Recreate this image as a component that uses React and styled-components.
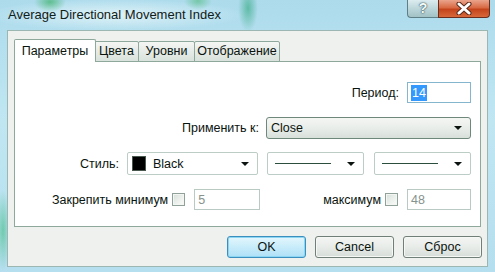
import React from "react";
import styled, { createGlobalStyle } from "styled-components";

const Global = createGlobalStyle`
  body {
    margin: 0;
    overflow: hidden;
    font-family: "Liberation Sans", Arial, sans-serif;
  }
`;

export default function App() {
  return (
    <Window>
      <Global />
      <TitleBar>
        <Title>Average Directional Movement Index</Title>
        <Caption>
          <HelpButton>?</HelpButton>
          <CloseButton>
            <svg width="18" height="13" viewBox="0 0 18 13">
              <path
                d="M4 2 L14 11 M14 2 L4 11"
                stroke="#5a2a1a"
                strokeWidth="5"
                strokeLinecap="round"
              />
              <path
                d="M4 2 L14 11 M14 2 L4 11"
                stroke="#ffffff"
                strokeWidth="3"
                strokeLinecap="round"
              />
            </svg>
          </CloseButton>
        </Caption>
      </TitleBar>

      <Client>
        <Tabs>
          <Tab $active $w={82}>Параметры</Tab>
          <Tab $w={45}>Цвета</Tab>
          <Tab $w={57}>Уровни</Tab>
          <Tab $w={86}>Отображение</Tab>
        </Tabs>

        <Panel>
          <Row>
            <Label>Период:</Label>
            <Input $w={64} $focus>
              <Selected>14</Selected>
            </Input>
          </Row>

          <Row $gap={7}>
            <Label>Применить к:</Label>
            <Combo $w={205}>
              <span>Close</span>
              <Arrow />
            </Combo>
          </Row>

          <Row $h={23} $gap={8}>
            <Label>Стиль:</Label>
            <FlatSelect $w={131}>
              <Swatch />
              <span>Black</span>
              <Arrow />
            </FlatSelect>
            <FlatSelect $w={97} $ml={1}>
              <LineSample />
              <Arrow />
            </FlatSelect>
            <FlatSelect $w={97} $ml={2}>
              <LineSample />
              <Arrow />
            </FlatSelect>
          </Row>

          <Row $gap={4}>
            <Label>Закрепить минимум</Label>
            <Check />
            <Input $w={66} $disabled $ml={5}>
              5
            </Input>
            <Label $ml={59}>максимум</Label>
            <Check />
            <Input $w={64} $disabled $ml={5}>
              48
            </Input>
          </Row>
        </Panel>

        <Buttons>
          <Button $default>OK</Button>
          <Button>Cancel</Button>
          <Button>Сброс</Button>
        </Buttons>
      </Client>
    </Window>
  );
}

const Window = styled.div`
  width: 495px;
  height: 272px;
  display: flex;
  flex-direction: column;
  box-sizing: border-box;
  padding: 0 7px 5px 7px;
  background:
    radial-gradient(ellipse 16px 10px at 50px 2px, rgba(40, 170, 80, 0.6), transparent),
    radial-gradient(ellipse 14px 9px at 198px 1px, rgba(60, 180, 100, 0.5), transparent),
    radial-gradient(ellipse 10px 24px at 248px 8px, rgba(30, 160, 110, 0.55), transparent),
    radial-gradient(ellipse 8px 40px at 3px 230px, rgba(40, 180, 110, 0.5), transparent),
    radial-gradient(ellipse 130px 16px at 115px 15px, rgba(235, 248, 250, 0.8), transparent),
    linear-gradient(180deg, #addbec 0%, #c0e6f2 45%, #b5deee 100%);
`;

const TitleBar = styled.div`
  height: 30px;
  flex: none;
  display: flex;
  align-items: flex-start;
`;

const Title = styled.div`
  font-size: 13px;
  line-height: 30px;
  padding-left: 1px;
  color: #112018;
  white-space: nowrap;
`;

const Caption = styled.div`
  margin-left: auto;
  margin-right: -2px;
  display: flex;
  height: 18px;
`;

const HelpButton = styled.div`
  width: 31px;
  height: 18px;
  box-sizing: border-box;
  border: 1px solid #5f7f86;
  border-top: none;
  border-right: none;
  border-radius: 0 0 0 4px;
  background: linear-gradient(180deg, #dcecef 0%, #bcd6da 50%, #a2c2c6 100%);
  color: #f4fbfb;
  font-weight: bold;
  font-size: 14px;
  line-height: 17px;
  text-align: center;
  text-shadow: 0 0 2px #2e4a50, 0 0 1px #2e4a50;
`;

const CloseButton = styled.div`
  width: 52px;
  height: 18px;
  box-sizing: border-box;
  border: 1px solid #6a2e1e;
  border-top: none;
  border-radius: 0 0 4px 0;
  background: linear-gradient(180deg, #eaa48c 0%, #d86a44 45%, #c4441c 55%, #d8683a 100%);
  display: flex;
  align-items: center;
  justify-content: center;
`;

const Client = styled.div`
  flex: 1;
  box-sizing: border-box;
  border: 1px solid #9cb6b2;
  background: #eef1ee;
  padding: 8px 5px 0 6px;
  display: flex;
  flex-direction: column;
`;

const Tabs = styled.div`
  display: flex;
  align-items: flex-end;
  height: 23px;
  position: relative;
  z-index: 1;
`;

const Tab = styled.div`
  width: ${(p) => p.$w}px;
  height: ${(p) => (p.$active ? "23px" : "21px")};
  box-sizing: border-box;
  margin: ${(p) => (p.$active ? "0 -1px 0 0" : "0 0 0 -1px")};
  border: 1px solid #8ea89c;
  border-bottom: ${(p) => (p.$active ? "none" : "1px solid #8ea89c")};
  border-radius: 2px 2px 0 0;
  background: ${(p) =>
    p.$active ? "#ffffff" : "linear-gradient(180deg, #f4f6f4 0%, #e6ebe7 50%, #d9e2dc 100%)"};
  font-size: 12.5px;
  line-height: ${(p) => (p.$active ? "22px" : "19px")};
  text-align: center;
  color: #0a140e;
  white-space: nowrap;
  position: relative;
  z-index: ${(p) => (p.$active ? 2 : 1)};
  &:first-child {
    margin-left: 0;
  }
`;

const Panel = styled.div`
  margin-top: -1px;
  width: 467px;
  height: 166px;
  box-sizing: border-box;
  border: 1px solid #8ea89c;
  background: #ffffff;
  padding: 20px 9px 0 0;
  display: flex;
  flex-direction: column;
  gap: 14px;
`;

const Row = styled.div`
  display: flex;
  justify-content: flex-end;
  align-items: center;
  gap: ${(p) => p.$gap ?? 8}px;
  height: ${(p) => p.$h ?? 21}px;
`;

const Label = styled.span`
  font-size: 12.5px;
  color: #0a140e;
  white-space: nowrap;
  margin-left: ${(p) => p.$ml ?? 0}px;
`;

const Input = styled.div`
  width: ${(p) => p.$w}px;
  height: 21px;
  box-sizing: border-box;
  margin-left: ${(p) => p.$ml ?? 0}px;
  border: 1px solid ${(p) => (p.$focus ? "#86b6ce" : "#b9cac2")};
  background: #ffffff;
  padding: 0 3px;
  display: flex;
  align-items: center;
  font-size: 12.5px;
  color: ${(p) => (p.$disabled ? "#87938c" : "#0a140e")};
`;

const Selected = styled.span`
  background: #3399ff;
  color: #ffffff;
  line-height: 16px;
  padding: 0 1px;
`;

const Combo = styled.div`
  width: ${(p) => p.$w}px;
  height: 22px;
  box-sizing: border-box;
  border: 1px solid #6f887c;
  border-radius: 3px;
  background: linear-gradient(180deg, #f4f6f4 0%, #e9ede9 50%, #d8e0da 100%);
  display: flex;
  align-items: center;
  padding: 0 8px 0 4px;
  font-size: 12.5px;
  color: #0a140e;
  span {
    flex: 1;
  }
`;

const FlatSelect = styled.div`
  width: ${(p) => p.$w}px;
  height: 23px;
  margin-left: ${(p) => p.$ml ?? 0}px;
  box-sizing: border-box;
  border: 1px solid #bccdc5;
  border-radius: 2px;
  background: #ffffff;
  display: flex;
  align-items: center;
  gap: 7px;
  padding: 0 8px 0 4px;
  font-size: 12.5px;
  color: #0a140e;
  span {
    flex: 1;
  }
`;

const Swatch = styled.div`
  width: 14px;
  height: 15px;
  box-sizing: border-box;
  background: #000000;
  border: 1px solid #48584f;
`;

const LineSample = styled.div`
  flex: 1;
  height: 1px;
  margin-left: 3px;
  margin-right: 9px;
  background: #2b4f3c;
`;

const Arrow = styled.div`
  width: 0;
  height: 0;
  border-left: 4px solid transparent;
  border-right: 4px solid transparent;
  border-top: 4px solid #0c1410;
`;

const Check = styled.div`
  width: 13px;
  height: 13px;
  box-sizing: border-box;
  border: 1px solid #8fa198;
  background: linear-gradient(135deg, #d6dfda 0%, #eef2ef 60%, #fafbfa 100%);
  box-shadow: inset 0 0 0 1px #f4f6f4;
`;

const Buttons = styled.div`
  display: flex;
  justify-content: flex-end;
  gap: 9px;
  padding: 9px 0 0 0;
`;

const Button = styled.div`
  width: 79px;
  height: 22px;
  box-sizing: border-box;
  border: 1px solid ${(p) => (p.$default ? "#3a8fbe" : "#707f78")};
  border-radius: 3px;
  background: ${(p) =>
    p.$default
      ? "linear-gradient(180deg, #e4f6fc 0%, #c8ecfa 50%, #aee0f6 100%)"
      : "linear-gradient(180deg, #f3f5f3 0%, #e8ece9 50%, #d6ddd8 100%)"};
  box-shadow: ${(p) => (p.$default ? "inset 0 0 0 1px #8cd6f4" : "inset 0 0 0 1px #f6f8f6")};
  font-size: 12.5px;
  line-height: 20px;
  text-align: center;
  color: #0a140e;
`;
